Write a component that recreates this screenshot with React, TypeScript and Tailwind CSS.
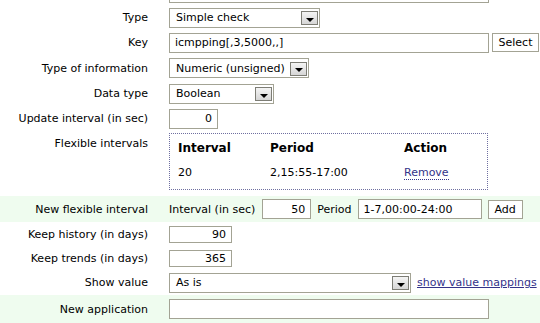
import React from "react";

const font = { fontFamily: '"DejaVu Sans", Verdana, sans-serif' };

function Label({ children, top }: { children?: React.ReactNode; top?: boolean }) {
  return (
    <div className={`w-[148px] shrink-0 text-right pr-0 ${top ? "self-start pt-[7px]" : ""}`}>
      {children}
    </div>
  );
}

function Row({ label, h, green, top, className = "", children }: { label?: string; h: string; green?: boolean; top?: boolean; className?: string; children?: React.ReactNode }) {
  return (
    <div className={`flex items-center gap-[21px] ${h} ${green ? "bg-[#effcef]" : ""} ${className}`}>
      <Label top={top}>{label}</Label>
      <div className={`flex items-center ${top ? "self-start pt-[2px]" : ""}`}>{children}</div>
    </div>
  );
}

function Input({ value = "", w, h = "h-[20px]", right }: { value?: string; w: string; h?: string; right?: boolean }) {
  return (
    <div className={`${w} ${h} border border-[#a3a394] bg-white flex items-center px-[5px] ${right ? "justify-end" : ""}`}>
      <span>{value}</span>
    </div>
  );
}

function Arrow() {
  return (
    <div className="w-[17px] h-[14px] border border-[#7d7d75] bg-gradient-to-b from-[#f4f4f4] to-[#d6d6d6] flex items-center justify-center mt-[1px]">
      <div className="w-0 h-0 border-l-[4px] border-r-[4px] border-t-[4px] border-l-transparent border-r-transparent border-t-black mt-[3px]" />
    </div>
  );
}

function Select({ value, w }: { value: string; w: string }) {
  return (
    <div className={`${w} h-[20px] border border-[#a3a394] bg-white flex items-center justify-between pl-[6px] pr-[1px]`}>
      <span>{value}</span>
      <Arrow />
    </div>
  );
}

function Button({ children, w }: { children: React.ReactNode; w: string }) {
  return (
    <div className={`${w} h-[19px] border border-[#a3a394] bg-white flex items-center justify-center`}>{children}</div>
  );
}

export default function App() {
  return (
    <div className="w-[540px] h-[323px] overflow-hidden bg-white text-[11px] text-black leading-none" style={font}>
      <Row h="h-[25px]" className="-mt-[20px]">
        <Input w="w-[320px]" />
      </Row>
      <Row label="Type" h="h-[25px]">
        <Select value="Simple check" w="w-[151px]" />
      </Row>
      <Row label="Key" h="h-[25px]">
        <Input value="icmpping[,3,5000,,]" w="w-[320px]" />
        <div className="ml-[3px]">
          <Button w="w-[47px]">Select</Button>
        </div>
      </Row>
      <Row label="Type of information" h="h-[26px]">
        <Select value="Numeric (unsigned)" w="w-[140px]" />
      </Row>
      <Row label="Data type" h="h-[25px]">
        <Select value="Boolean" w="w-[105px]" />
      </Row>
      <Row label="Update interval (in sec)" h="h-[25px]">
        <Input value="0" w="w-[49px]" right />
      </Row>
      <Row label="Flexible intervals" h="h-[65px]" top>
        <div className="w-[319px] h-[57px] border border-dotted border-[#6f6fa0] pl-[8px] pt-[8px]">
          <div className="grid grid-cols-[92px_134px_auto] gap-y-[13px]">
            <span className="font-bold text-[12px]">Interval</span>
            <span className="font-bold text-[12px]">Period</span>
            <span className="font-bold text-[12px]">Action</span>
            <span>20</span>
            <span>2,15:55-17:00</span>
            <span className="text-[#333388] border-b border-dotted border-[#333388] self-start justify-self-start pb-[1px]">Remove</span>
          </div>
        </div>
      </Row>
      <Row label="New flexible interval" h="h-[26px]" green>
        <span>Interval (in sec)</span>
        <div className="ml-[7px]">
          <Input value="50" w="w-[49px]" right />
        </div>
        <span className="ml-[6px]">Period</span>
        <div className="ml-[6px]">
          <Input value="1-7,00:00-24:00" w="w-[124px]" />
        </div>
        <div className="ml-[6px]">
          <Button w="w-[35px]">Add</Button>
        </div>
      </Row>
      <Row label="Keep history (in days)" h="h-[25px]">
        <Input value="90" w="w-[63px]" h="h-[17px]" right />
      </Row>
      <Row label="Keep trends (in days)" h="h-[23px]">
        <Input value="365" w="w-[63px]" h="h-[17px]" right />
      </Row>
      <Row label="Show value" h="h-[25px]">
        <Select value="As is" w="w-[242px]" />
        <span className="ml-[6px] text-[#33338a] underline">show value mappings</span>
      </Row>
      <Row label="New application" h="h-[28px]" green>
        <Input w="w-[320px]" />
      </Row>
    </div>
  );
}
